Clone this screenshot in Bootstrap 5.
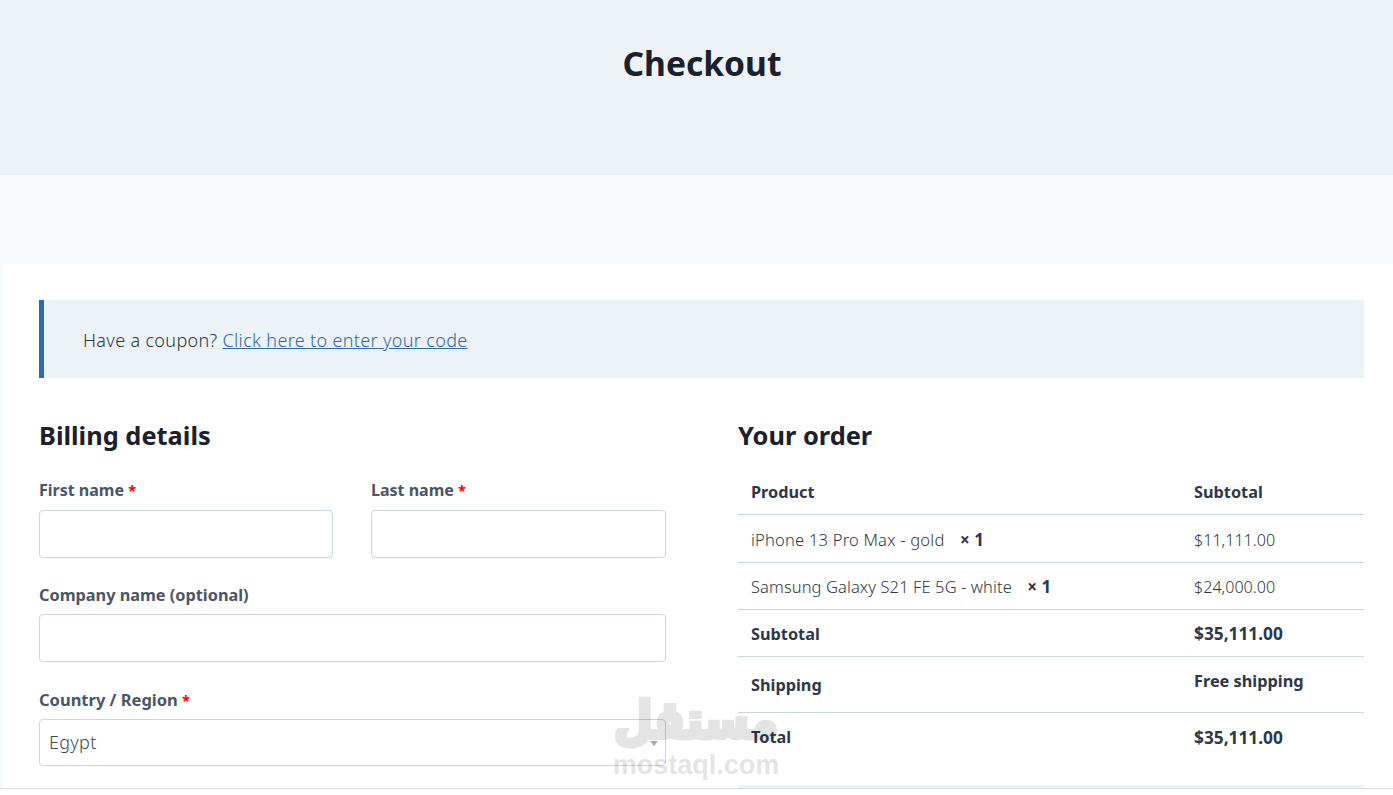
<!doctype html>
<html lang="en">
<head>
<meta charset="utf-8">
<title>Checkout</title>
<link href="https://cdn.jsdelivr.net/npm/bootstrap@5.3.0/dist/css/bootstrap.min.css" rel="stylesheet">
<style>
html,body{height:795px;overflow:hidden;background:#fff}
body{font-family:"Noto Sans","Open Sans",sans-serif;font-size:16px;color:#1a202c}
.viewport-clip{height:789px;overflow:hidden;border-bottom:1px solid #dcdfe2;background:#f7fafc;position:relative}
.hero-band{height:175px;background:#edf2f7;padding-top:38px;padding-left:11px}
.hero-title{font-size:33.6px;line-height:50px;font-weight:700;margin:0;color:#1a202c;text-align:center}
.pale-band{height:89px}
.sheet{margin-left:3px;background:#fff;border-top-left-radius:4px;padding:36px 29px 0 36px;height:600px}
.coupon-box{height:78px;background:#edf2f7;border-left:5px solid #2b6cb0;padding-left:39px;padding-top:2px;display:flex;align-items:center;font-size:18px;letter-spacing:.34px;color:#2d3748;margin-bottom:39px;font-weight:300}
.coupon-box a{color:#2b6cb0}
.split{display:grid;grid-template-columns:627px 626px;column-gap:72px}
.section-head{font-size:25.4px;line-height:36px;font-weight:700;margin:0 0 25px;color:#1a202c}
.form-row-pair{display:grid;grid-template-columns:294px 295px;column-gap:38px}
.fld{margin-bottom:25px}
.fld-roomy{margin-bottom:26px}
.fld label{display:block;font-weight:700;font-size:16.3px;line-height:24px;color:#4a5568;margin-bottom:7px}
.form-row-pair .fld label{margin-bottom:8px}
.fld label.lbl-tight{font-size:16px}
.fld label.lbl-wide{font-size:16.5px}
.fld .req{color:#f00;font-size:14.5px}
.fld .form-control,.fld .form-select{height:48px;border:1px solid #cbd5e0;border-radius:4px;box-shadow:none}
.fld .form-select{height:47px;font-size:18px;letter-spacing:.3px;color:#3c4759;padding-left:9px;font-weight:300;background-image:none}
.select-wrap{position:relative}
.select-wrap::after{content:"";position:absolute;right:8px;top:22px;border-left:4px solid transparent;border-right:4px solid transparent;border-top:5px solid #a0aec0}
.order-head{margin-bottom:14px}
.order-tbl{width:100%;margin:0;border-collapse:collapse;font-size:16px}
.order-tbl td,.order-tbl th{border-bottom:1px solid #cbd5e0;padding:3px 13px 0;vertical-align:middle;line-height:24px;font-weight:700;color:#2d3748;font-size:16.3px}
.order-tbl td.plain{font-weight:300;color:#2d3748;font-size:16.5px;letter-spacing:.22px}
.order-tbl td.plain.snug{letter-spacing:.1px}
.order-tbl td.price{font-size:16.1px;letter-spacing:0}
.order-tbl td.money{font-size:17.3px}
.order-tbl .col-sub{width:183px}
.order-tbl .qty{margin-left:11px;font-weight:700;font-size:17px;letter-spacing:0;color:#2d3748}
.rh-head{height:47px}
.rh-first{height:48px}
.rh-46{height:47px}
.rh-shipping{height:56px}
.order-tbl .rh-shipping th{padding-top:1px}
.rh-total{height:50px}
.order-tbl .rh-total th{border-bottom:0;padding-top:0}
.order-tbl .rh-total td{border-bottom:0;padding-top:1px}
.order-tbl .top-shift{padding:0 13px 6px}
.pay-box{height:100px;background:#edf2f7;margin-top:23px}
.stamp{position:absolute;left:611px;top:692px;width:170px;text-align:center;color:#000;opacity:.1;pointer-events:none;line-height:1}
.stamp-ar{font-family:"DejaVu Sans",sans-serif;font-weight:700;font-size:45px;line-height:58px;white-space:nowrap;-webkit-text-stroke:4px #000;transform:scaleY(1.15)}
.stamp-en{font-family:"Liberation Sans",sans-serif;font-weight:700;font-size:27px;line-height:30px}
</style>
</head>
<body>
<div class="viewport-clip">
  <header class="hero-band"><h1 class="hero-title">Checkout</h1></header>
  <div class="pale-band"></div>
  <main class="sheet">
    <div class="coupon-box"><span>Have a coupon? <a href="#">Click here to enter your code</a></span></div>
    <div class="split">
      <section>
        <h3 class="section-head">Billing details</h3>
        <div class="form-row-pair">
          <div class="fld"><label class="lbl-tight" for="fn">First name <span class="req">*</span></label><input id="fn" class="form-control" type="text"></div>
          <div class="fld"><label class="lbl-tight" for="ln">Last name <span class="req">*</span></label><input id="ln" class="form-control" type="text"></div>
        </div>
        <div class="fld fld-roomy"><label for="co">Company name (optional)</label><input id="co" class="form-control" type="text"></div>
        <div class="fld"><label class="lbl-wide" for="cr">Country / Region <span class="req">*</span></label>
          <div class="select-wrap"><select id="cr" class="form-select"><option>Egypt</option></select></div></div>
      </section>
      <section>
        <h3 class="section-head order-head">Your order</h3>
        <table class="order-tbl">
          <tbody>
          <tr class="rh-head"><th>Product</th><th class="col-sub">Subtotal</th></tr>
          <tr class="rh-first"><td class="plain">iPhone 13 Pro Max - gold <span class="qty">× 1</span></td><td class="plain price">$11,111.00</td></tr>
          <tr class="rh-46"><td class="plain snug">Samsung Galaxy S21 FE 5G - white <span class="qty">× 1</span></td><td class="plain price">$24,000.00</td></tr>
          <tr class="rh-46"><th>Subtotal</th><td class="money">$35,111.00</td></tr>
          <tr class="rh-shipping"><th>Shipping</th><td class="top-shift">Free shipping</td></tr>
          <tr class="rh-total"><th>Total</th><td class="money">$35,111.00</td></tr>
          </tbody>
        </table>
        <div class="pay-box"></div>
      </section>
    </div>
  </main>
  <div class="stamp" dir="rtl"><div class="stamp-ar">مستقل</div><div class="stamp-en" dir="ltr">mostaql.com</div></div>
</div>
<script src="https://cdn.jsdelivr.net/npm/bootstrap@5.3.0/dist/js/bootstrap.bundle.min.js"></script>
</body>
</html>
